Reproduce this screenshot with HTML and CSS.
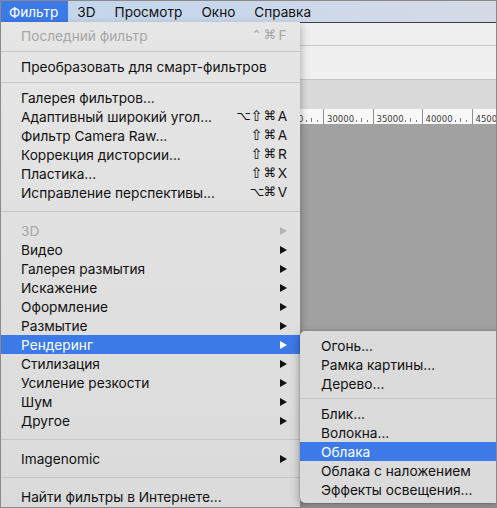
FILE: index.html
```html
<!DOCTYPE html>
<html lang="ru">
<head>
<meta charset="utf-8">
<title>Фильтр</title>
<link rel="stylesheet" href="styles.css">
</head>
<body>
<div class="screen">
  <div class="menubar">
    <span class="mb-item active">Фильтр</span>
    <span class="mb-item">3D</span>
    <span class="mb-item">Просмотр</span>
    <span class="mb-item">Окно</span>
    <span class="mb-item">Справка</span>
  </div>

  <div class="app">
    <div class="app-title"></div>
    <div class="app-options"></div>
    <div class="app-tabs"></div>
    <div class="ruler">
      <svg class="ruler-svg" width="495" height="15" viewBox="0 0 495 15">
        <g class="major">
          <line x1="322.5" y1="0" x2="322.5" y2="15"/>
          <line x1="372.5" y1="0" x2="372.5" y2="15"/>
          <line x1="421.5" y1="0" x2="421.5" y2="15"/>
          <line x1="471.5" y1="0" x2="471.5" y2="15"/>
        </g>
        <g class="minor">
          <line x1="305.5" y1="11" x2="305.5" y2="13"/>
          <line x1="310.5" y1="9" x2="310.5" y2="13"/>
          <line x1="316.5" y1="11" x2="316.5" y2="13"/>
          <line x1="355.5" y1="11" x2="355.5" y2="13"/>
          <line x1="360.5" y1="9" x2="360.5" y2="13"/>
          <line x1="366.5" y1="11" x2="366.5" y2="13"/>
          <line x1="404.5" y1="11" x2="404.5" y2="13"/>
          <line x1="409.5" y1="9" x2="409.5" y2="13"/>
          <line x1="415.5" y1="11" x2="415.5" y2="13"/>
          <line x1="454.5" y1="11" x2="454.5" y2="13"/>
          <line x1="459.5" y1="9" x2="459.5" y2="13"/>
          <line x1="465.5" y1="11" x2="465.5" y2="13"/>
        </g>
        <g class="nums">
          <text x="297" y="13">0</text>
          <text x="326" y="13">30000</text>
          <text x="375.5" y="13">35000</text>
          <text x="424.5" y="13">40000</text>
          <text x="474.5" y="13">4500</text>
        </g>
      </svg>
    </div>
    <div class="canvas"></div>
  </div>

  <div class="menu main-menu">
    <div class="item disabled"><span class="label">Последний фильтр</span><span class="sc"><span class="k">⌃</span><span class="k">⌘</span><span class="key">F</span></span></div>
    <div class="sep"></div>
    <div class="item"><span class="label">Преобразовать для смарт-фильтров</span></div>
    <div class="sep"></div>
    <div class="item"><span class="label">Галерея фильтров...</span></div>
    <div class="item"><span class="label">Адаптивный широкий угол...</span><span class="sc"><span class="k">⌥</span><span class="k shift">⇧</span><span class="k">⌘</span><span class="key">A</span></span></div>
    <div class="item"><span class="label">Фильтр Camera Raw...</span><span class="sc"><span class="k shift">⇧</span><span class="k">⌘</span><span class="key">A</span></span></div>
    <div class="item"><span class="label">Коррекция дисторсии...</span><span class="sc"><span class="k shift">⇧</span><span class="k">⌘</span><span class="key">R</span></span></div>
    <div class="item"><span class="label">Пластика...</span><span class="sc"><span class="k shift">⇧</span><span class="k">⌘</span><span class="key">X</span></span></div>
    <div class="item"><span class="label">Исправление перспективы...</span><span class="sc"><span class="k">⌥</span><span class="k">⌘</span><span class="key">V</span></span></div>
    <div class="sep lg"></div>
    <div class="item disabled"><span class="label">3D</span><span class="arrow"></span></div>
    <div class="item"><span class="label">Видео</span><span class="arrow"></span></div>
    <div class="item"><span class="label">Галерея размытия</span><span class="arrow"></span></div>
    <div class="item"><span class="label">Искажение</span><span class="arrow"></span></div>
    <div class="item"><span class="label">Оформление</span><span class="arrow"></span></div>
    <div class="item"><span class="label">Размытие</span><span class="arrow"></span></div>
    <div class="item active"><span class="label">Рендеринг</span><span class="arrow"></span></div>
    <div class="item"><span class="label">Стилизация</span><span class="arrow"></span></div>
    <div class="item"><span class="label">Усиление резкости</span><span class="arrow"></span></div>
    <div class="item"><span class="label">Шум</span><span class="arrow"></span></div>
    <div class="item"><span class="label">Другое</span><span class="arrow"></span></div>
    <div class="sep lg"></div>
    <div class="item"><span class="label">Imagenomic</span><span class="arrow"></span></div>
    <div class="sep lg"></div>
    <div class="item"><span class="label">Найти фильтры в Интернете...</span></div>
  </div>

  <div class="menu submenu">
    <div class="item"><span class="label">Огонь...</span></div>
    <div class="item"><span class="label">Рамка картины...</span></div>
    <div class="item"><span class="label">Дерево...</span></div>
    <div class="sep sm"></div>
    <div class="item"><span class="label">Блик...</span></div>
    <div class="item"><span class="label">Волокна...</span></div>
    <div class="item active"><span class="label">Облака</span></div>
    <div class="item"><span class="label">Облака с наложением</span></div>
    <div class="item"><span class="label">Эффекты освещения...</span></div>
  </div>
</div>
</body>
</html>
```

FILE: styles.css
```css
* { box-sizing: border-box; }

html, body {
  margin: 0;
  padding: 0;
  background: #8c8c8c;
}

.screen {
  position: relative;
  width: 497px;
  height: 508px;
  border: 1px solid #8a8a8a;
  overflow: hidden;
  display: flex;
  flex-direction: column;
  background: #a1a1a1;
  font-family: Inter, "Noto Sans", sans-serif;
  font-size: 13.7px;
  color: #111;
}

/* ---------- menubar ---------- */
.menubar {
  flex: none;
  height: 21px;
  display: flex;
  align-items: stretch;
  background: linear-gradient(to right, #c1d5ee, #cbd8ea 55%, #d6dae6);
  font-size: 13.6px;
  color: #111;
}

.mb-item {
  display: flex;
  align-items: center;
  padding: 0 9.5px;
}

.mb-item.active {
  background: #3c7ae7;
  color: #fff;
  padding-left: 8px;
}

/* ---------- app window behind menus ---------- */
.app {
  flex: 1;
  display: flex;
  flex-direction: column;
}

.app-title {
  flex: none;
  height: 24px;
  background: #efefef;
  border-top: 1px solid #3b3f4b;
  border-bottom: 1px solid #c7c7c7;
}

.app-options {
  flex: none;
  height: 34px;
  background: #f0f0f0;
  border-bottom: 1px solid #c4c4c4;
}

.app-tabs {
  flex: none;
  height: 29px;
  background: #dadada;
}

.ruler {
  flex: none;
  height: 15px;
  background: #f8f8f8;
}

.ruler-svg { display: block; }

.ruler-svg .major line {
  stroke: #8e8e8e;
  stroke-width: 1;
}

.ruler-svg .minor line {
  stroke: #7a7a7a;
  stroke-width: 1;
}

.ruler-svg .nums text {
  font-family: "DejaVu Sans", Verdana, sans-serif;
  font-size: 8.5px;
  fill: #3c3c3c;
}

.canvas {
  flex: 1;
  background: #a1a1a1;
}

/* ---------- menus ---------- */
.menu {
  position: absolute;
  display: flex;
  flex-direction: column;
}

.main-menu {
  left: 0;
  top: 21px;
  width: 299px;
  height: 500px;
  padding-top: 4px;
  background: linear-gradient(#e6e6e6, #e1e1e1 40%, #dadada);
  box-shadow: 1px 3px 8px rgba(0, 0, 0, 0.28);
}

.submenu {
  left: 299px;
  top: 330px;
  width: 200px;
  height: 172px;
  padding: 5px 0 4px;
  background: #dbdbdb;
  border-radius: 5px;
  box-shadow: 0 0 0 0.5px rgba(0, 0, 0, 0.18), -1px 3px 9px rgba(0, 0, 0, 0.3);
}

.item {
  flex: none;
  height: 19px;
  display: flex;
  align-items: center;
  padding: 0 12px 0 20px;
  white-space: nowrap;
}

.submenu .item {
  padding-left: 21px;
}

.label { flex: 1; }

.item.disabled { color: #a6a6a6; }

.item.active {
  background: #3c7ae7;
  color: #fff;
}

.sc {
  display: flex;
  align-items: center;
  gap: 0.5px;
}

.sc .k {
  flex: none;
  width: 13px;
  text-align: center;
  font-family: "DejaVu Sans", sans-serif;
  font-size: 12.5px;
  line-height: 1;
}

.sc .k.shift {
  font-size: 14.5px;
}

.sc .key {
  flex: none;
  width: 11px;
  text-align: center;
  line-height: 1;
}

.arrow {
  width: 0;
  height: 0;
  margin-right: 1px;
  border-left: 7px solid #111;
  border-top: 4.5px solid transparent;
  border-bottom: 4.5px solid transparent;
}

.item.disabled .arrow { border-left-color: #b3b3b3; }
.item.active .arrow { border-left-color: #fff; }

.sep {
  flex: none;
  height: 12px;
  display: flex;
  align-items: center;
}

.sep::before {
  content: "";
  flex: 1;
  height: 1px;
  background: #c6c6c6;
}

.sep.lg { height: 19px; }
.sep.sm { height: 11px; }
```
